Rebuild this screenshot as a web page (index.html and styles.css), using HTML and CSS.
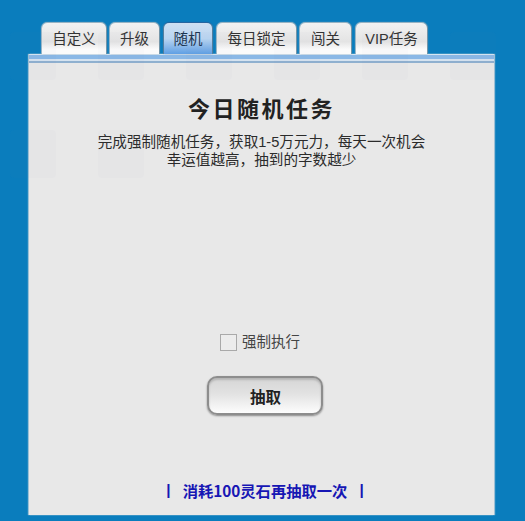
FILE: index.html
```html
<!DOCTYPE html>
<html lang="zh-CN">
<head>
    <meta charset="UTF-8">
    <title>今日随机任务</title>
    <link rel="stylesheet" href="styles.css">
</head>
<body>
    <div class="window">
        <div class="tabs">
            <div class="tab tab-custom">自定义</div>
            <div class="tab tab-upgrade">升级</div>
            <div class="tab tab-random active">随机</div>
            <div class="tab tab-daily">每日锁定</div>
            <div class="tab tab-stage">闯关</div>
            <div class="tab tab-vip">VIP任务</div>
        </div>
        <div class="panel">
            <div class="panel-stripe"></div>
            <div class="panel-body">
                <h1 class="title">今日随机任务</h1>
                <p class="desc">完成强制随机任务，获取1-5万元力，每天一次机会<br>幸运值越高，抽到的字数越少</p>
                <label class="force-row">
                    <span class="check"></span>
                    <span>强制执行</span>
                </label>
                <button class="draw-btn">抽取</button>
                <div class="redraw"><span class="bar">|</span>消耗100灵石再抽取一次<span class="bar">|</span></div>
            </div>
        </div>
    </div>

    <!-- faint desktop icons showing through the window -->
    <div class="ghosts ghosts-top">
        <span class="ghost"></span>
        <span class="ghost"></span>
        <span class="ghost"></span>
        <span class="ghost"></span>
        <span class="ghost"></span>
        <span class="ghost"></span>
    </div>
    <div class="ghosts ghosts-low">
        <span class="ghost"></span>
        <span class="ghost"></span>
    </div>
</body>
</html>
```

FILE: styles.css
```css
/* Page */
body, html {
    margin: 0;
    padding: 0;
    height: 100%;
    overflow: hidden;
    background: #0a7dbd;
    font-family: "Liberation Sans", "Noto Sans CJK SC", sans-serif;
}

.window {
    width: 465px;
    margin-left: 29px;
    padding-top: 23px;
}

/* Tabs */
.tabs {
    display: flex;
    height: 31px;
    padding-left: 13px;
}

.tab {
    box-sizing: border-box;
    height: 31px;
    padding-top: 6px;
    text-align: center;
    font-size: 14.5px;
    line-height: 20px;
    color: #333;
    border-radius: 5px 5px 0 0;
    background: linear-gradient(#f2f2f2, #e4e4e4 60%, #fbfbfb 85%);
    box-shadow: 1px 0 1px #7f97a6, -1px 0 1px #a9bcc8, 0 -1px 1px #a9bcc8;
}

.tab-custom { width: 64px; margin-right: 4px; }
.tab-upgrade { width: 49px; margin-right: 5px; }
.tab-random { width: 48px; margin-right: 5px; }
.tab-daily { width: 79px; margin-right: 4px; }
.tab-stage { width: 51px; margin-right: 5px; }
.tab-vip { width: 71px; }

.tab.active {
    color: #1d3550;
    background: linear-gradient(#cfe0f2, #b9d5f1 50%, #5f9fe4);
    box-shadow: 1px 0 1px #5d7f9c, -1px 0 1px #5d7f9c, 0 -1px 1px #1e5f9e;
}

/* Panel */
.panel {
    height: 461px;
    background: #e8e8e8;
    box-shadow: 1px 0 1px #9cc0d6, -1px 0 1px #9cc0d6;
}

.panel-stripe {
    box-sizing: border-box;
    height: 9px;
    background: #8ab8e6;
    border-top: 1px solid #d6e6f2;
    border-bottom: 2px solid #8fb0cf;
    box-shadow: inset 0 -2px 0 #d5e3f0;
}

.panel-body {
    display: flex;
    flex-direction: column;
    align-items: center;
}

.title {
    margin: 30px 0 0 0;
    font-family: "Noto Sans CJK SC", sans-serif;
    font-size: 22px;
    line-height: 28px;
    font-weight: 700;
    letter-spacing: 2.5px;
    color: #222;
}

.desc {
    margin: 12px 0 0 0;
    text-align: center;
    font-size: 14.6px;
    line-height: 18px;
    color: #2b2b2b;
}

.force-row {
    display: flex;
    align-items: center;
    gap: 5px;
    margin-top: 163px;
    margin-right: 3px;
    font-size: 14.5px;
    line-height: 20px;
    color: #444;
}

.check {
    box-sizing: border-box;
    width: 17px;
    height: 17px;
    border: 1px solid #a9a9a9;
    background: #ececec;
}

.draw-btn {
    box-sizing: border-box;
    width: 116px;
    height: 39px;
    margin-top: 24px;
    margin-left: 7px;
    padding-right: 5px;
    font-family: "Noto Sans CJK SC", sans-serif;
    font-size: 15.5px;
    font-weight: 700;
    color: #222;
    border: 2px solid #8d8d8d;
    border-radius: 10px;
    background: linear-gradient(#d6d6d6, #e2e2e2 45%, #fdfdfd);
    box-shadow: 0 1px 2px #8a8a8a, inset 0 2px 2px #b5b5b5;
}

.redraw {
    display: flex;
    gap: 12px;
    margin-top: 65px;
    margin-left: 7px;
    font-family: "Noto Sans CJK SC", sans-serif;
    font-size: 15.3px;
    line-height: 20px;
    font-weight: 700;
    color: #1616b4;
}

.bar {
    font-family: "Liberation Sans", sans-serif;
}

/* Ghost icons */
.ghosts {
    position: absolute;
    left: 10px;
    display: flex;
    gap: 42px;
    pointer-events: none;
}

.ghosts-top { top: 32px; }
.ghosts-low { top: 130px; }

.ghost {
    width: 46px;
    height: 48px;
    border-radius: 4px;
    background: rgba(110, 140, 180, 0.025);
}
```
